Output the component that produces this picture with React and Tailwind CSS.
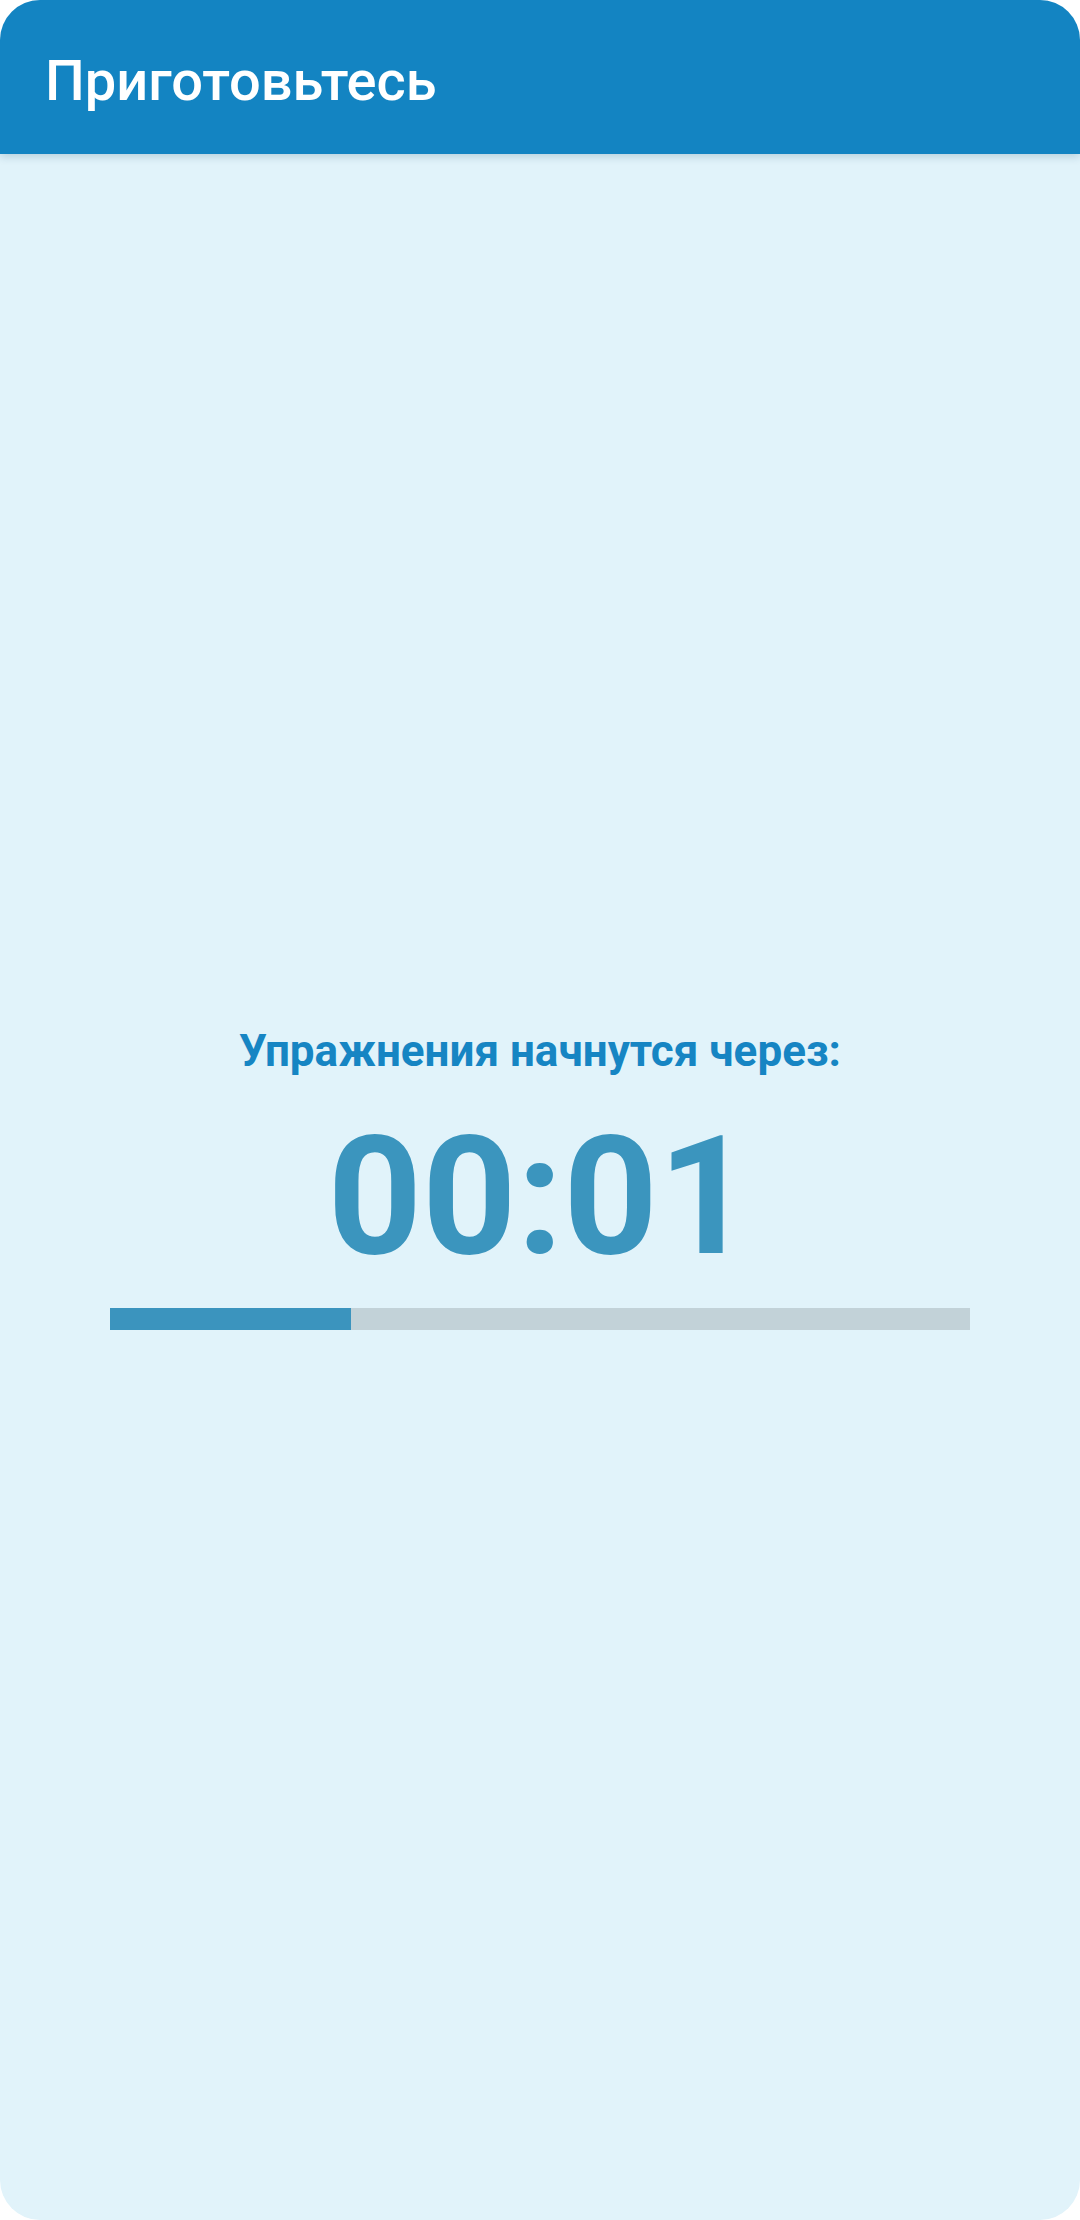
export default function App() {
  return (
    <div className="w-[1080px] h-[2220px] bg-white" style={{ fontFamily: 'Roboto, "Noto Sans", sans-serif' }}>
      <div className="w-full h-full rounded-[40px] overflow-hidden bg-[#e1f3fa] flex flex-col">
        <div className="h-[154px] shrink-0 bg-[#1384c2] flex items-center pl-[45px] pt-[7px] relative z-10 shadow-[0_3px_8px_rgba(0,60,100,0.18)]">
          <h1 className="text-white text-[56px] leading-none font-medium">Приготовьтесь</h1>
        </div>
        <div className="flex-1 flex flex-col items-center justify-center pb-[20px]">
          <div className="text-[#1685c3] text-[44px] font-bold leading-[52px]">Упражнения начнутся через:</div>
          <div className="text-[#3b95be] text-[165px] font-bold leading-[193px] mt-[23px]">00:01</div>
          <div className="w-[860px] h-[22px] bg-[#c2d2d8] mt-[15px] flex">
            <div className="h-full bg-[#3b94be]" style={{ width: '28%' }} />
          </div>
        </div>
      </div>
    </div>
  );
}
